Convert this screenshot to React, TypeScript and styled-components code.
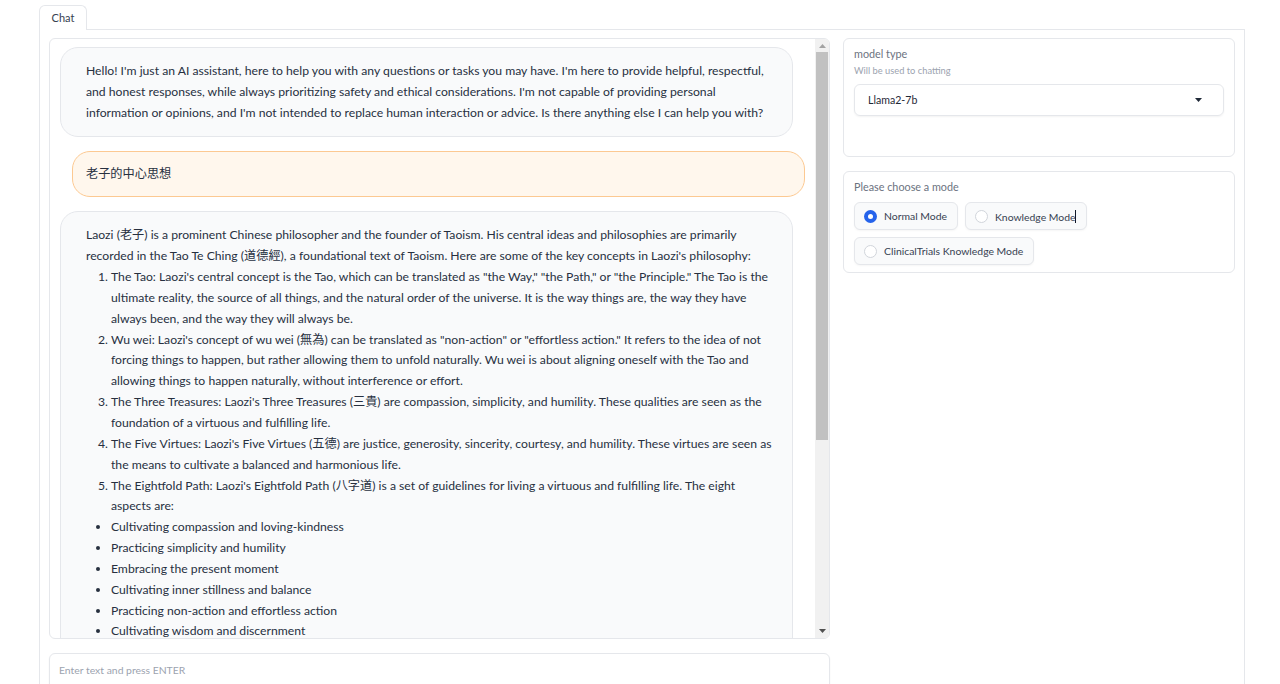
import React from "react";
import styled, { createGlobalStyle } from "styled-components";

const GlobalStyle = createGlobalStyle`
  html, body { margin: 0; padding: 0; background: #ffffff; }
  body {
    font-family: Lato, "Noto Sans CJK SC", sans-serif;
    color: #1f2937;
  }
  * { box-sizing: border-box; }
`;

const Page = styled.div`
  height: 684px;
  overflow: hidden;
  padding: 5px 35px 0 39px;
  display: flex;
  flex-direction: column;
`;

const TabBar = styled.div`
  display: flex;
  height: 24px;
  position: relative;
  z-index: 1;
`;

const Tab = styled.div`
  width: 48px;
  height: 25px;
  border: 1px solid #e5e7eb;
  border-bottom: none;
  border-radius: 6px 6px 0 0;
  background: #ffffff;
  font-size: 11px;
  color: #374151;
  display: flex;
  align-items: center;
  justify-content: center;
  padding-bottom: 1px;
`;

const Panel = styled.div`
  flex: 1;
  border: 1px solid #e5e7eb;
  border-bottom: none;
  padding: 8px 9px 0;
  display: flex;
  gap: 13px;
  align-items: flex-start;
`;

const LeftCol = styled.div`
  width: 781px;
  display: flex;
  flex-direction: column;
  gap: 14px;
`;

const RightCol = styled.div`
  width: 392px;
  display: flex;
  flex-direction: column;
  gap: 14px;
`;

const ChatBox = styled.div`
  height: 601px;
  border: 1px solid #e5e7eb;
  border-radius: 6px;
  overflow: hidden;
  background: #ffffff;
  display: flex;
`;

const ScrollArea = styled.div`
  flex: 1;
  min-width: 0;
  overflow: hidden;
`;

const ScrollTrack = styled.div`
  width: 14px;
  flex-shrink: 0;
  background: #f1f1f1;
  display: flex;
  flex-direction: column;
`;

const ScrollButton = styled.div<{ $h: number }>`
  height: ${(p) => p.$h}px;
  display: flex;
  align-items: center;
  justify-content: center;
  flex-shrink: 0;
`;

const Thumb = styled.div`
  height: 388px;
  margin: 0 1px;
  background: #c1c1c1;
`;

const Spacer = styled.div`
  flex: 1;
`;

const Messages = styled.div`
  display: flex;
  flex-direction: column;
  gap: 14px;
  padding: 8px 10px 24px;
`;

const Bubble = styled.div<{ $user?: boolean }>`
  width: calc(100% - 12px);
  align-self: ${(p) => (p.$user ? "flex-end" : "flex-start")};
  border: 1px solid ${(p) => (p.$user ? "#fcc992" : "#e5e7eb")};
  background: ${(p) => (p.$user ? "#fff7ed" : "#f9fafb")};
  border-radius: 18px;
  padding: ${(p) => (p.$user ? "12px 13px" : "13px 18px 12px 25px")};
  font-size: 12.2px;
  line-height: 20.85px;
  color: #27303f;

  p { margin: 0; }
  ol, ul { margin: 0; padding-left: 25px; }
`;

const InputBox = styled.div`
  height: 46px;
  border: 1px solid #e5e7eb;
  border-radius: 6px;
  box-shadow: 0 1px 2px rgba(0, 0, 0, 0.05);
  padding: 8px 9px;
  font-size: 10.4px;
  line-height: 16px;
  color: #9ca3af;
`;

const Card = styled.div<{ $h: number }>`
  height: ${(p) => p.$h}px;
  border: 1px solid #e5e7eb;
  border-radius: 6px;
  padding: 8px 10px 7px;
  background: #ffffff;
`;

const Label = styled.div`
  font-size: 10.8px;
  line-height: 14px;
  color: #6b7280;
`;

const Info = styled.div`
  font-size: 9.3px;
  line-height: 12px;
  margin-top: 4px;
  color: #9ca3af;
`;

const Select = styled.div`
  margin-top: 7px;
  height: 32px;
  border: 1px solid #e5e7eb;
  border-radius: 6px;
  box-shadow: 0 1px 2px rgba(0, 0, 0, 0.05);
  padding: 0 21px 0 13px;
  display: flex;
  align-items: center;
  justify-content: space-between;
  font-size: 10.6px;
  color: #1f2937;
`;

const Options = styled.div`
  margin-top: 8px;
  display: flex;
  flex-wrap: wrap;
  gap: 7px;
`;

const Option = styled.div<{ $caret?: boolean }>`
  height: 28px;
  display: flex;
  align-items: center;
  gap: 7px;
  padding: 0 10px 0 9px;
  border: 1px solid #e5e7eb;
  border-radius: 6px;
  background: #f9fafb;
  box-shadow: 0 1px 2px rgba(0, 0, 0, 0.04);
  font-size: 10.4px;
  color: #374151;

  span::after {
    content: "";
    display: ${(p) => (p.$caret ? "inline-block" : "none")};
    width: 1px;
    height: 13px;
    background: #111827;
    vertical-align: -2px;
    margin-left: -1px;
  }
`;

const Radio = styled.div<{ $checked?: boolean }>`
  width: 13px;
  height: 13px;
  border-radius: 50%;
  flex-shrink: 0;
  border: ${(p) => (p.$checked ? "none" : "1px solid #d1d5db")};
  background: ${(p) => (p.$checked ? "#2563eb" : "#ffffff")};
  display: flex;
  align-items: center;
  justify-content: center;

  &::after {
    content: "";
    width: 5px;
    height: 5px;
    border-radius: 50%;
    background: #ffffff;
    display: ${(p) => (p.$checked ? "block" : "none")};
  }
`;

const Caret = () => (
  <svg width="7" height="4" viewBox="0 0 7 4">
    <path d="M0 0 H7 L3.5 4 Z" fill="#1f2937" />
  </svg>
);

const Arrow = ({ up }: { up?: boolean }) => (
  <svg width="7" height="4" viewBox="0 0 7 4">
    {up ? (
      <path d="M0 4 L3.5 0 L7 4 Z" fill="#a3a3a3" />
    ) : (
      <path d="M0 0 H7 L3.5 4 Z" fill="#505050" />
    )}
  </svg>
);

export default function App() {
  return (
    <>
      <GlobalStyle />
      <Page>
        <TabBar>
          <Tab>Chat</Tab>
        </TabBar>
        <Panel>
          <LeftCol>
            <ChatBox>
              <ScrollArea>
                <Messages>
                  <Bubble>
                    <p>
                      Hello! I'm just an AI assistant, here to help you with any questions or tasks you may
                      have. I'm here to provide helpful, respectful, and honest responses, while always
                      prioritizing safety and ethical considerations. I'm not capable of providing personal
                      information or opinions, and I'm not intended to replace human interaction or advice.
                      Is there anything else I can help you with?
                    </p>
                  </Bubble>
                  <Bubble $user>
                    <p>老子的中心思想</p>
                  </Bubble>
                  <Bubble>
                    <p>
                      Laozi (老子) is a prominent Chinese philosopher and the founder of Taoism. His central
                      ideas and philosophies are primarily recorded in the Tao Te Ching (道德經), a
                      foundational text of Taoism. Here are some of the key concepts in Laozi's philosophy:
                    </p>
                    <ol>
                      <li>
                        The Tao: Laozi's central concept is the Tao, which can be translated as "the Way,"
                        "the Path," or "the Principle." The Tao is the ultimate reality, the source of all
                        things, and the natural order of the universe. It is the way things are, the way they
                        have always been, and the way they will always be.
                      </li>
                      <li>
                        Wu wei: Laozi's concept of wu wei (無為) can be translated as "non-action" or
                        "effortless action." It refers to the idea of not forcing things to happen, but
                        rather allowing them to unfold naturally. Wu wei is about aligning oneself with the
                        Tao and allowing things to happen naturally, without interference or effort.
                      </li>
                      <li>
                        The Three Treasures: Laozi's Three Treasures (三貴) are compassion, simplicity, and
                        humility. These qualities are seen as the foundation of a virtuous and fulfilling
                        life.
                      </li>
                      <li>
                        The Five Virtues: Laozi's Five Virtues (五德) are justice, generosity, sincerity,
                        courtesy, and humility. These virtues are seen as the means to cultivate a balanced
                        and harmonious life.
                      </li>
                      <li>
                        The Eightfold Path: Laozi's Eightfold Path (八字道) is a set of guidelines for living
                        a virtuous and fulfilling life. The eight aspects are:
                      </li>
                    </ol>
                    <ul>
                      <li>Cultivating compassion and loving-kindness</li>
                      <li>Practicing simplicity and humility</li>
                      <li>Embracing the present moment</li>
                      <li>Cultivating inner stillness and balance</li>
                      <li>Practicing non-action and effortless action</li>
                      <li>Cultivating wisdom and discernment</li>
                      <li>Living in harmony with nature</li>
                      <li>Letting go of attachments and desires</li>
                    </ul>
                    <ol start={6}>
                      <li>
                        The Importance of Nature: Laozi believed that nature is a reflection of the Tao, and
                        that humans should strive to live in harmony with the natural world. He saw nature as
                        a source of wisdom and inspiration.
                      </li>
                      <li>
                        The Balance of Yin and Yang: Laozi taught that all things contain opposing yet
                        complementary forces, and that harmony arises from the balance between them.
                      </li>
                    </ol>
                    <p>
                      Overall, Laozi's central ideas emphasize the importance of living in harmony with the
                      natural order of the universe, embracing simplicity and humility, and cultivating inner
                      stillness and balance. His teachings have had a profound influence on Chinese
                      philosophy, culture, and spirituality, and continue to be studied and practiced around
                      the world today.
                    </p>
                  </Bubble>
                </Messages>
              </ScrollArea>
              <ScrollTrack>
                <ScrollButton $h={13}>
                  <Arrow up />
                </ScrollButton>
                <Thumb />
                <Spacer />
                <ScrollButton $h={14}>
                  <Arrow />
                </ScrollButton>
              </ScrollTrack>
            </ChatBox>
            <InputBox>Enter text and press ENTER</InputBox>
          </LeftCol>
          <RightCol>
            <Card $h={119}>
              <Label>model type</Label>
              <Info>Will be used to chatting</Info>
              <Select>
                <span>Llama2-7b</span>
                <Caret />
              </Select>
            </Card>
            <Card $h={102}>
              <Label>Please choose a mode</Label>
              <Options>
                <Option>
                  <Radio $checked />
                  <span>Normal Mode</span>
                </Option>
                <Option $caret>
                  <Radio />
                  <span>Knowledge Mode</span>
                </Option>
                <Option>
                  <Radio />
                  <span>ClinicalTrials Knowledge Mode</span>
                </Option>
              </Options>
            </Card>
          </RightCol>
        </Panel>
      </Page>
    </>
  );
}
